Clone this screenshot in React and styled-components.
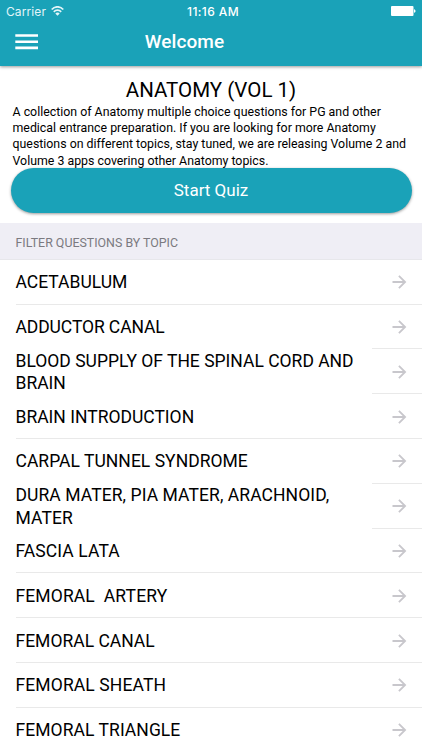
import React from 'react';
import styled, { createGlobalStyle } from 'styled-components';

const GlobalStyle = createGlobalStyle`
  *, *::before, *::after { box-sizing: border-box; }
  html, body { margin: 0; background: #fff; }
  body { font-family: Roboto, "Liberation Sans", sans-serif; color: #000; overflow: hidden; }
  h1, h2, p, ul { margin: 0; padding: 0; font-weight: 400; }
`;

const Screen = styled.div`
  width: 422px;
  height: 750px;
  overflow: hidden;
  background: #fff;
`;

const Header = styled.header`
  height: 65.5px;
  background: #1aa2b8;
  color: #fff;
  box-shadow: 0 1px 3px rgba(0, 0, 0, 0.4);
`;

const StatusBar = styled.div`
  display: grid;
  grid-template-columns: 1fr auto 1fr;
  align-items: center;
  height: 22px;
  padding: 0 6px;
  font-family: Inter, Roboto, sans-serif;
  font-size: 12px;
`;

const Carrier = styled.div`
  display: flex;
  align-items: center;
  gap: 5px;
  letter-spacing: 0.1px;
  color: #e3f5f8;
`;

const Time = styled.div`
  padding-left: 4px;
  font-weight: 500;
  letter-spacing: 0.4px;
`;

const Battery = styled.svg`
  justify-self: end;
  display: block;
`;

const NavBar = styled.div`
  display: grid;
  grid-template-columns: 54px 1fr;
  align-items: center;
  height: 39px;
`;

const MenuButton = styled.button`
  display: flex;
  padding: 1px 0 0 15px;
  border: 0;
  background: none;
`;

const Title = styled.h1`
  padding-right: 107px;
  text-align: center;
  font-size: 19px;
  font-weight: 500;
  line-height: 24px;
  letter-spacing: 0.1px;
`;

const Intro = styled.section`
  display: flex;
  flex-direction: column;
  height: 157.5px;
  padding: 12.5px 10.5px 0;
`;

const Heading = styled.h2`
  text-align: center;
  font-size: 20.5px;
  line-height: 25px;
`;

const Description = styled.p`
  padding: 1px 0 0 2px;
  font-size: 12.36px;
  line-height: 16.2px;
  white-space: pre-line;
`;

const StartButton = styled.button`
  flex: none;
  height: 45.5px;
  margin-top: -1px;
  padding-bottom: 2px;
  border: 0;
  border-radius: 23px;
  background: #1aa2b8;
  color: #fff;
  font: 400 17px Roboto, sans-serif;
  box-shadow: 0 1px 3px rgba(0, 0, 0, 0.4);
`;

const SectionHeader = styled.h2`
  display: flex;
  align-items: center;
  height: 36.8px;
  padding: 4px 0 0 15.5px;
  border-bottom: 1px solid #e7e7eb;
  background: #efeef5;
  color: #7b7a80;
  font-size: 12.4px;
`;

const TopicList = styled.ul`
  list-style: none;
`;

const TopicRow = styled.li`
  display: flex;
  height: 44.8px;
  padding-left: 15.5px;
`;

const TopicName = styled.div`
  display: flex;
  align-items: center;
  width: 356.5px;
  padding-top: 2px;
  border-bottom: 1px solid ${(p) => (p.$open ? 'transparent' : '#e9e9e9')};
  font-size: 17.5px;
  line-height: 22.8px;
  white-space: pre;
  letter-spacing: ${(p) => p.$spacing || 0}px;
`;

const ArrowCell = styled.div`
  display: flex;
  flex: 1;
  align-items: center;
  padding: 1px 0 0 20px;
  border-bottom: 1px solid #e9e9e9;
`;

const description = `A collection of Anatomy multiple choice questions for PG and other
medical entrance preparation. If you are looking for more Anatomy
questions on different topics, stay tuned, we are releasing Volume 2 and
Volume 3 apps covering other Anatomy topics.`;

const topics = [
  { name: 'ACETABULUM' },
  { name: 'ADDUCTOR CANAL', open: true, spacing: -0.1 },
  { name: 'BLOOD SUPPLY OF THE SPINAL CORD AND\nBRAIN', open: true },
  { name: 'BRAIN INTRODUCTION' },
  { name: 'CARPAL TUNNEL SYNDROME', open: true, spacing: 0.03 },
  { name: 'DURA MATER, PIA MATER, ARACHNOID,\nMATER', open: true, spacing: 0.08 },
  { name: 'FASCIA LATA', spacing: 0.1 },
  { name: 'FEMORAL  ARTERY', spacing: 0.12 },
  { name: 'FEMORAL CANAL' },
  { name: 'FEMORAL SHEATH', spacing: 0.12 },
  { name: 'FEMORAL TRIANGLE', spacing: 0.06 },
];

const WifiIcon = () => (
  <svg width="13" height="10" viewBox="0 0 13 10" fill="none" stroke="#e3f5f8" strokeWidth="1.7">
    <path d="M.7 3.5C4-.1 9-.1 12.3 3.5M2.8 5.9c2.1-2.3 5.3-2.3 7.4 0" />
    <path d="M4.3 7.4c1.2-1.3 3.2-1.3 4.4 0L6.5 9.8Z" fill="#e3f5f8" stroke="none" />
  </svg>
);

const MenuIcon = () => (
  <svg width="24" height="16" viewBox="0 0 24 16" fill="#fff">
    <path d="M.3.2h22.7v2.6H.3zM.3 6.4h22.7V9H.3zM.3 12.6h22.7v2.6H.3z" />
  </svg>
);

const ArrowIcon = () => (
  <svg width="15" height="14" viewBox="0 0 15 14" fill="none" stroke="#c8c7cc" strokeWidth="1.8">
    <path d="M.5 7h12.6M6.9.8 13.1 7l-6.2 6.2" />
  </svg>
);

export default function App() {
  return (
    <Screen>
      <GlobalStyle />
      <Header>
        <StatusBar>
          <Carrier>Carrier<WifiIcon /></Carrier>
          <Time>11:16 AM</Time>
          <Battery width="25" height="10" viewBox="0 0 25 10" fill="#fff">
            <rect width="22.5" height="10" rx="1" />
            <path d="M23 3.2c2 .3 2 3.3 0 3.6z" />
          </Battery>
        </StatusBar>
        <NavBar>
          <MenuButton aria-label="Menu"><MenuIcon /></MenuButton>
          <Title>Welcome</Title>
        </NavBar>
      </Header>
      <Intro>
        <Heading>ANATOMY (VOL 1)</Heading>
        <Description>{description}</Description>
        <StartButton>Start Quiz</StartButton>
      </Intro>
      <SectionHeader>FILTER QUESTIONS BY TOPIC</SectionHeader>
      <TopicList>
        {topics.map(({ name, open, spacing }) => (
          <TopicRow key={name}>
            <TopicName $open={open} $spacing={spacing}>{name}</TopicName>
            <ArrowCell><ArrowIcon /></ArrowCell>
          </TopicRow>
        ))}
      </TopicList>
    </Screen>
  );
}
